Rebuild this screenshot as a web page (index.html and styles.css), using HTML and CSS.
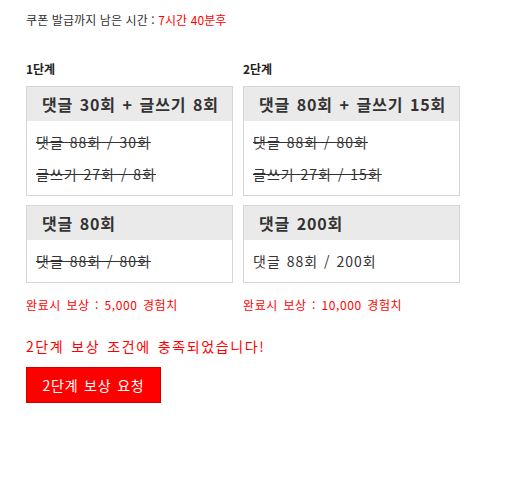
FILE: index.html
```html
<!DOCTYPE html>
<html lang="ko">
<head>
<meta charset="utf-8">
<title>쿠폰 발급</title>
<link rel="stylesheet" href="styles.css">
</head>
<body>
<div class="page">
  <p class="timer">쿠폰 발급까지 남은 시간 : <span class="red">7시간 40분후</span></p>
  <div class="stages">
    <div class="stage stage-1">
      <div class="label">1단계</div>
      <div class="box">
        <div class="box-head">댓글 30회 + 글쓰기 8회</div>
        <div class="box-body">
          <p class="row done">댓글 88회 / 30회</p>
          <p class="row done">글쓰기 27회 / 8회</p>
        </div>
      </div>
      <div class="box">
        <div class="box-head">댓글 80회</div>
        <div class="box-body">
          <p class="row done">댓글 88회 / 80회</p>
        </div>
      </div>
      <p class="reward">완료시 보상 : 5,000 경험치</p>
    </div>
    <div class="stage stage-2">
      <div class="label">2단계</div>
      <div class="box">
        <div class="box-head">댓글 80회 + 글쓰기 15회</div>
        <div class="box-body">
          <p class="row done">댓글 88회 / 80회</p>
          <p class="row done">글쓰기 27회 / 15회</p>
        </div>
      </div>
      <div class="box">
        <div class="box-head">댓글 200회</div>
        <div class="box-body">
          <p class="row">댓글 88회 / 200회</p>
        </div>
      </div>
      <p class="reward">완료시 보상 : 10,000 경험치</p>
    </div>
  </div>
  <p class="notice">2단계 보상 조건에 충족되었습니다!</p>
  <button class="btn" type="button">2단계 보상 요청</button>
</div>
</body>
</html>
```

FILE: styles.css
```css
html, body {
  margin: 0;
  padding: 0;
  background: #fff;
}
.page {
  padding: 12px 26px;
  font-family: "Noto Sans CJK KR", "Noto Sans", sans-serif;
  font-size: 12px;
  color: #333;
}
.timer {
  margin: 0;
  line-height: 16px;
  letter-spacing: 0.1px;
}
.red {
  color: #f00;
}
.stages {
  display: grid;
  grid-template-columns: 207px 217px;
  column-gap: 10px;
  margin-top: 33px;
}
.label {
  font-weight: bold;
  line-height: 16px;
  margin-bottom: 9px;
  color: #222;
}
.box {
  border: 1px solid #d6d6d6;
  margin-bottom: 9px;
}
.box-head {
  background: #eaeaea;
  height: 34px;
  line-height: 34px;
  padding-left: 15px;
  font-size: 16px;
  font-weight: bold;
  color: #333;
  letter-spacing: 0.8px;
  word-spacing: 1.5px;
}
.box-body {
  padding: 10px 9px;
}
.row {
  margin: 0 0 10px;
  line-height: 22px;
  font-size: 14px;
  color: #333;
  letter-spacing: 1px;
  word-spacing: 1px;
}
.row:last-child {
  margin-bottom: 0;
}
.row.done {
  text-decoration: line-through;
}
.reward {
  margin: 14px 0 0;
  color: #f00;
  line-height: 16px;
  letter-spacing: 0.6px;
  word-spacing: 1.5px;
}
.stage .box + .box {
  margin-bottom: 0;
}
.notice {
  margin: 23px 0 0;
  color: #f00;
  font-size: 14px;
  line-height: 20px;
  letter-spacing: 1.6px;
  word-spacing: 1.5px;
}
.btn {
  margin-top: 11px;
  width: 135px;
  height: 36px;
  background: #f00;
  border: 1px solid #c00;
  color: #fff;
  font-family: "Noto Sans CJK KR", "Noto Sans", sans-serif;
  font-size: 14px;
  letter-spacing: 0.8px;
  word-spacing: 1px;
  padding: 0;
}
```
